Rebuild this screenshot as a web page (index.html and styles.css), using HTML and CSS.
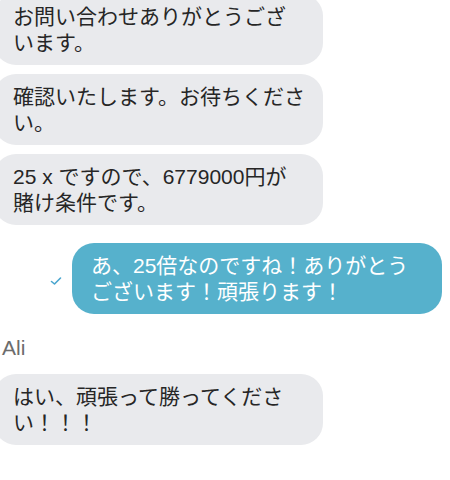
FILE: index.html
```html
<!DOCTYPE html>
<html lang="ja">
<head>
<meta charset="utf-8">
<link rel="stylesheet" href="styles.css">
</head>
<body>
<div class="chat">
  <div class="msg in first">お問い合わせありがとうござ<br>います。</div>
  <div class="msg in">確認いたします。お待ちくださ<br>い。</div>
  <div class="msg in">25 x ですので、6779000円が<br>賭け条件です。</div>
  <div class="row-out">
    <svg class="check" width="12" height="10" viewBox="0 0 12 10"><path d="M1.5 5.5 L4.5 8 L10.5 2" fill="none" stroke="#4aa6cf" stroke-width="1.6" stroke-linecap="round" stroke-linejoin="round"/></svg>
    <div class="msg out">あ、25倍なのですね！ありがとう<br>ございます！頑張ります！</div>
  </div>
  <div class="name">Ali</div>
  <div class="msg in">はい、頑張って勝ってくださ<br>い！！！</div>
</div>
</body>
</html>
```

FILE: styles.css
```css
html, body {
  margin: 0;
  padding: 0;
  background: #ffffff;
  overflow: hidden;
}
body {
  width: 450px;
  height: 480px;
  font-family: "Liberation Sans", "Noto Sans CJK JP", sans-serif;
  color: #262626;
}
.chat {
  display: flex;
  flex-direction: column;
  align-items: flex-start;
}
.msg {
  box-sizing: border-box;
  font-size: 21px;
  line-height: 25.5px;
  padding: 10px 10px 10px 19px;
  border-radius: 22px;
  white-space: nowrap;
}
.in {
  background: #e9eaed;
  width: 329px;
  margin-left: -6px;
  margin-bottom: 9px;
}
.first {
  margin-top: -6px;
}
.row-out {
  align-self: stretch;
  display: flex;
  justify-content: flex-end;
  align-items: center;
  gap: 10px;
  padding-right: 8px;
  margin-top: 9px;
}
.check {
  margin-top: 5px;
}
.out {
  background: #56b1cc;
  color: #ffffff;
  width: 370px;
}
.name {
  font-family: "Liberation Sans", "Noto Sans", sans-serif;
  font-size: 21px;
  line-height: 24px;
  color: #6c6c6c;
  margin: 22px 0 14px 2px;
}
```
